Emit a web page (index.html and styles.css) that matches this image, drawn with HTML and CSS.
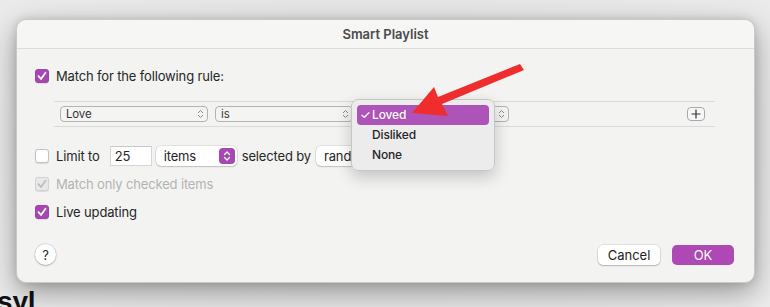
FILE: index.html
```html
<!DOCTYPE html>
<html lang="en">
<head>
    <meta charset="UTF-8">
    <title>Smart Playlist</title>
    <link rel="stylesheet" href="styles.css">
</head>
<body>
    <div class="dialog">
        <div class="titlebar">Smart Playlist</div>

        <div class="content">
            <div class="row first">
                <span class="check on"><svg viewBox="0 0 14 14"><path d="M3.5 7.2 L6 10 L10.5 3.8" /></svg></span>
                <span class="label">Match for the following rule:</span>
            </div>

            <div class="rules">
                <div class="popup love">Love <svg class="chev" viewBox="0 0 7 10"><path d="M1 4 L3.5 1.5 L6 4 M1 6 L3.5 8.5 L6 6" /></svg></div>
                <div class="popup is">is <svg class="chev" viewBox="0 0 7 10"><path d="M1 4 L3.5 1.5 L6 4 M1 6 L3.5 8.5 L6 6" /></svg></div>
                <!-- value popup sits under the open menu -->
                <div class="popup value"><svg class="chev" viewBox="0 0 7 10"><path d="M1 4 L3.5 1.5 L6 4 M1 6 L3.5 8.5 L6 6" /></svg></div>
                <div class="plus"><svg viewBox="0 0 12 12"><path d="M6 1.5 V10.5 M1.5 6 H10.5" /></svg></div>
            </div>

            <div class="row limit">
                <span class="check"></span>
                <span class="label">Limit to</span>
                <span class="field">25</span>
                <div class="select items">
                    items
                    <span class="stepper"><svg viewBox="0 0 8 12"><path d="M1.5 4.5 L4 2 L6.5 4.5 M1.5 7.5 L4 10 L6.5 7.5" /></svg></span>
                </div>
                <span class="label">selected by</span>
                <div class="select rand">rand</div>
            </div>

            <div class="row only">
                <span class="check dim"><svg viewBox="0 0 14 14"><path d="M3.5 7.2 L6 10 L10.5 3.8" /></svg></span>
                <span class="label muted">Match only checked items</span>
            </div>

            <div class="row live">
                <span class="check on"><svg viewBox="0 0 14 14"><path d="M3.5 7.2 L6 10 L10.5 3.8" /></svg></span>
                <span class="label">Live updating</span>
            </div>

            <div class="footer">
                <button class="help">?</button>
                <button class="btn cancel">Cancel</button>
                <button class="btn ok">OK</button>
            </div>
        </div>

        <!-- open value menu -->
        <div class="menu">
            <div class="menu-item selected"><span class="tick">✓</span>Loved</div>
            <div class="menu-item">Disliked</div>
            <div class="menu-item">None</div>
        </div>
    </div>

    <h1 class="behind">syl</h1>

    <svg class="arrow" viewBox="0 0 770 307">
        <polygon points="412,113 434,87 438,97 520,64 524,70 442,104 448,116" />
    </svg>
</body>
</html>
```

FILE: styles.css
```css
/* Reset */
body, h1, button {
    margin: 0;
    padding: 0;
}

body {
    width: 770px;
    height: 307px;
    overflow: hidden;
    position: relative;
    background: radial-gradient(ellipse at 50% 45%, #dcdcdc 0%, #e6e6e6 60%, #ececec 100%);
    font-family: Inter, "Noto Sans", sans-serif;
    letter-spacing: -0.15px;
    color: #262626;
}

/* Dialog */
.dialog {
    position: relative;
    margin: 19px 0 0 16px;
    width: 739px;
    height: 264px;
    box-sizing: border-box;
    background: #f3f3f2;
    border: 1px solid #c9c9c9;
    border-radius: 10px;
    box-shadow: 0 10px 28px rgba(0, 0, 0, 0.35), 0 0 8px rgba(0, 0, 0, 0.12);
}

.titlebar {
    height: 28px;
    line-height: 29px;
    text-align: center;
    font-size: 13px;
    font-weight: 600;
    letter-spacing: 0;
    color: #4b4b4b;
    background: #f6f6f5;
    border-bottom: 1px solid #dcdcdc;
    border-radius: 10px 10px 0 0;
}

.content {
    padding: 0 19px 0 18px;
    display: flex;
    flex-direction: column;
}

.row {
    display: flex;
    align-items: center;
    height: 14px;
    font-size: 13px;
}

.row.first { margin-top: 20px; }
.row.limit { margin-top: 19px; height: 20px; }
.row.only { margin-top: 11px; }
.row.live { margin-top: 14px; }

.label {
    margin-left: 7px;
    white-space: nowrap;
}

.muted {
    color: #b3b3b3;
}

/* Checkboxes */
.check {
    width: 14px;
    height: 14px;
    box-sizing: border-box;
    border-radius: 3px;
    background: #fff;
    border: 1px solid #c4c4c4;
    box-shadow: 0 0.5px 1px rgba(0, 0, 0, 0.1);
    flex-shrink: 0;
}

.check svg {
    display: block;
    width: 14px;
    height: 14px;
    margin: -1px;
    fill: none;
    stroke: #fff;
    stroke-width: 1.8;
    stroke-linecap: round;
    stroke-linejoin: round;
}

.check.on {
    background: #a846b4;
    border-color: #a143ad;
}

.check.dim {
    background: #e8e8e8;
    border-color: #d3d3d3;
}

.check.dim svg {
    stroke: #bdbdbd;
}

/* Rule row */
.rules {
    margin: 18px 20px 0 19px;
    height: 24px;
    border-top: 1px solid #dadada;
    border-bottom: 1px solid #dadada;
    display: flex;
    align-items: center;
    padding: 0 10px 0 6px;
}

.popup {
    position: relative;
    height: 16px;
    box-sizing: border-box;
    border: 1px solid #b3b3b3;
    border-radius: 4px;
    background: #f4f4f3;
    font-size: 11.5px;
    line-height: 14px;
    padding-left: 5px;
    color: #333;
}

.popup.love { width: 148px; }
.popup.is { width: 138px; margin-left: 7px; }
.popup.value { width: 150px; margin-left: 6px; }

.chev {
    position: absolute;
    right: 3px;
    top: 2px;
    width: 7px;
    height: 10px;
    fill: none;
    stroke: #8a8a8a;
    stroke-width: 1;
}

.plus {
    margin-left: auto;
    width: 18px;
    height: 14px;
    box-sizing: border-box;
    border: 1px solid #a9a9a9;
    border-radius: 4px;
    background: #f7f7f7;
}

.plus svg {
    display: block;
    width: 12px;
    height: 12px;
    margin: 0 2px;
    fill: none;
    stroke: #333;
    stroke-width: 1.2;
}

/* Limit row */
.field {
    margin-left: 10px;
    width: 42px;
    height: 20px;
    box-sizing: border-box;
    background: #fff;
    border: 1px solid #d6d6d6;
    border-top-color: #c8c8c8;
    padding-left: 4px;
    line-height: 18px;
}

.select {
    height: 20px;
    box-sizing: border-box;
    background: #fff;
    border-radius: 5px;
    box-shadow: 0 0 0 0.5px rgba(0, 0, 0, 0.15), 0 1px 1.5px rgba(0, 0, 0, 0.15);
    line-height: 20px;
    padding-left: 8px;
    display: flex;
    align-items: center;
    justify-content: space-between;
}

.select.items {
    margin-left: 4px;
    width: 81px;
    padding-right: 2px;
}

.select.rand {
    margin-left: 5px;
    width: 40px;
    border-radius: 5px 0 0 5px;
}

.stepper {
    width: 16px;
    height: 16px;
    border-radius: 4px;
    background: #a846b4;
}

.stepper svg {
    display: block;
    width: 8px;
    height: 12px;
    margin: 2px 4px;
    fill: none;
    stroke: #fff;
    stroke-width: 1.3;
    stroke-linecap: round;
    stroke-linejoin: round;
}

.row.limit .select + .label {
    margin-left: 5px;
}

/* Footer buttons */
.footer {
    margin-top: 25px;
    display: flex;
    align-items: center;
    padding-right: 1px;
}

.help {
    width: 21px;
    height: 21px;
    border-radius: 50%;
    border: none;
    background: #fff;
    box-shadow: 0 0 0 0.5px rgba(0, 0, 0, 0.15), 0 1px 2px rgba(0, 0, 0, 0.2);
    font-family: Inter, sans-serif;
    font-size: 13px;
    color: #222;
    margin-right: auto;
}

.btn {
    width: 62px;
    height: 20px;
    border: none;
    border-radius: 5px;
    font-family: Inter, sans-serif;
    font-size: 13px;
}

.cancel {
    background: #fff;
    color: #222;
    box-shadow: 0 0 0 0.5px rgba(0, 0, 0, 0.15), 0 1px 1.5px rgba(0, 0, 0, 0.2);
}

.ok {
    margin-left: 12px;
    background: #ad48b4;
    color: #fff;
}

/* Open menu */
.menu {
    position: absolute;
    left: 334px;
    top: 79px;
    width: 144px;
    box-sizing: border-box;
    padding: 5px;
    background: rgba(236, 236, 236, 0.98);
    border: 1px solid #c6c6c6;
    border-radius: 7px;
    box-shadow: 0 6px 16px rgba(0, 0, 0, 0.2);
}

.menu-item {
    height: 20px;
    line-height: 20px;
    font-size: 12px;
    font-weight: 500;
    padding-left: 15px;
    position: relative;
    color: #262626;
}

.menu-item.selected {
    background: #ae53b7;
    color: #fff;
    border-radius: 4px;
}

.tick {
    position: absolute;
    left: 3px;
}

/* Page heading peeking out underneath */
.behind {
    margin: 4px 0 0 -3px;
    font-family: "Liberation Sans", Arial, sans-serif;
    font-size: 28px;
    font-weight: bold;
    color: #111;
    line-height: 30px;
}

.arrow {
    position: absolute;
    left: 0;
    top: 0;
    width: 770px;
    height: 307px;
}

.arrow polygon {
    fill: #ef2d2d;
}
```
